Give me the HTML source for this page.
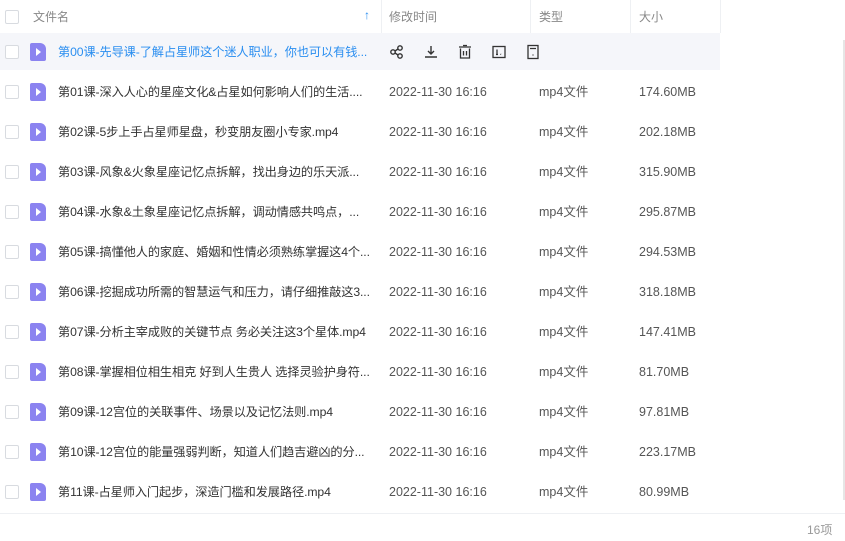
<html><head><style>
body{margin:0;width:845px;height:541px;background:#fff;font-family:"Liberation Sans","Noto Sans CJK SC",sans-serif;position:relative;overflow:hidden;color:#333}
.hd{position:absolute;top:0;left:0;width:720px;height:33px;border-bottom:1px solid #eef0f3;font-size:12px;color:#888}
.hd span{position:absolute;top:9px;line-height:16px}
.sep{position:absolute;top:0;width:1px;height:33px;background:#eef0f3}
.row{position:absolute;left:0;width:720px;height:40px;font-size:12.5px}
.cb{position:absolute;left:5px;top:13px;width:12px;height:12px;border:1px solid #d8dbe0;border-radius:2px;background:#fff}
.ic{position:absolute;left:30px;top:11px;width:16px;height:18px;background:#8b83f0;border-radius:2px 6px 2px 2px}
.ic:after{content:"";position:absolute;left:6px;top:5px;border-left:5px solid #fff;border-top:4px solid transparent;border-bottom:4px solid transparent}
.n,.t,.y,.s{position:absolute;top:12px;line-height:16px;height:16px;white-space:nowrap}
.n{left:58px;font-size:12.2px;letter-spacing:-0.1px}
.t{left:389px;color:#555}
.y{left:539px;color:#555}
.s{left:639px;color:#555}
svg{position:absolute;top:12px}
</style></head><body>
<div class="hd"><div class="cb" style="top:10px"></div><span style="left:33px">文件名</span><span style="left:364px;color:#2a8ef0;top:7px;font-weight:bold">↑</span><span style="left:389px">修改时间</span><span style="left:539px">类型</span><span style="left:639px">大小</span>
<div class="sep" style="left:381px"></div><div class="sep" style="left:530px"></div><div class="sep" style="left:630px"></div><div class="sep" style="left:720px"></div></div>
<div style="position:absolute;left:0;top:33px;width:720px;height:37px;background:#f5f6fa"></div>
<div class="row" style="top:32px"><div class="cb"></div><div class="ic"></div><div class="n" style="color:#2a8ef0">第00课-先导课-了解占星师这个迷人职业，你也可以有钱...</div>
<svg style="left:389px" width="16" height="16" viewBox="0 0 16 16" fill="none" stroke="#333" stroke-width="1.4"><circle cx="4" cy="8" r="2.2"/><circle cx="11" cy="4" r="2.2"/><circle cx="11" cy="12" r="2.2"/><path d="M6 7L9 5M6 9L9 11"/></svg>
<svg style="left:423px" width="16" height="16" viewBox="0 0 16 16" fill="none" stroke="#333" stroke-width="1.4"><path d="M8 2V10M5 7L8 10L11 7M2 13H14"/></svg>
<svg style="left:457px" width="16" height="16" viewBox="0 0 16 16" fill="none" stroke="#333" stroke-width="1.3"><path d="M2 3H14M6 1.5H10M3.5 4.5V14H12.5V4.5M6.5 7V11.5M9.5 7V11.5"/></svg>
<svg style="left:491px" width="16" height="16" viewBox="0 0 16 16" fill="none" stroke="#333" stroke-width="1.3"><rect x="2" y="2.5" width="12" height="11"/><path d="M6 5.5V10.5M5 10.5H7M9.5 10L10 10.5"/></svg>
<svg style="left:525px" width="16" height="16" viewBox="0 0 16 16" fill="none" stroke="#333" stroke-width="1.3"><rect x="3" y="1.5" width="10" height="13"/><path d="M5 4.5H11M8 10.5V11.5"/></svg>
</div>
<div class="row" style="top:72px"><div class="cb"></div><div class="ic"></div><div class="n">第01课-深入人心的星座文化&amp;占星如何影响人们的生活....</div><div class="t">2022-11-30 16:16</div><div class="y">mp4文件</div><div class="s">174.60MB</div></div>
<div class="row" style="top:112px"><div class="cb"></div><div class="ic"></div><div class="n">第02课-5步上手占星师星盘，秒变朋友圈小专家.mp4</div><div class="t">2022-11-30 16:16</div><div class="y">mp4文件</div><div class="s">202.18MB</div></div>
<div class="row" style="top:152px"><div class="cb"></div><div class="ic"></div><div class="n">第03课-风象&amp;火象星座记忆点拆解，找出身边的乐天派...</div><div class="t">2022-11-30 16:16</div><div class="y">mp4文件</div><div class="s">315.90MB</div></div>
<div class="row" style="top:192px"><div class="cb"></div><div class="ic"></div><div class="n">第04课-水象&amp;土象星座记忆点拆解，调动情感共鸣点，...</div><div class="t">2022-11-30 16:16</div><div class="y">mp4文件</div><div class="s">295.87MB</div></div>
<div class="row" style="top:232px"><div class="cb"></div><div class="ic"></div><div class="n">第05课-搞懂他人的家庭、婚姻和性情必须熟练掌握这4个...</div><div class="t">2022-11-30 16:16</div><div class="y">mp4文件</div><div class="s">294.53MB</div></div>
<div class="row" style="top:272px"><div class="cb"></div><div class="ic"></div><div class="n">第06课-挖掘成功所需的智慧运气和压力，请仔细推敲这3...</div><div class="t">2022-11-30 16:16</div><div class="y">mp4文件</div><div class="s">318.18MB</div></div>
<div class="row" style="top:312px"><div class="cb"></div><div class="ic"></div><div class="n">第07课-分析主宰成败的关键节点 务必关注这3个星体.mp4</div><div class="t">2022-11-30 16:16</div><div class="y">mp4文件</div><div class="s">147.41MB</div></div>
<div class="row" style="top:352px"><div class="cb"></div><div class="ic"></div><div class="n">第08课-掌握相位相生相克 好到人生贵人 选择灵验护身符...</div><div class="t">2022-11-30 16:16</div><div class="y">mp4文件</div><div class="s">81.70MB</div></div>
<div class="row" style="top:392px"><div class="cb"></div><div class="ic"></div><div class="n">第09课-12宫位的关联事件、场景以及记忆法则.mp4</div><div class="t">2022-11-30 16:16</div><div class="y">mp4文件</div><div class="s">97.81MB</div></div>
<div class="row" style="top:432px"><div class="cb"></div><div class="ic"></div><div class="n">第10课-12宫位的能量强弱判断，知道人们趋吉避凶的分...</div><div class="t">2022-11-30 16:16</div><div class="y">mp4文件</div><div class="s">223.17MB</div></div>
<div class="row" style="top:472px"><div class="cb"></div><div class="ic"></div><div class="n">第11课-占星师入门起步，深造门槛和发展路径.mp4</div><div class="t">2022-11-30 16:16</div><div class="y">mp4文件</div><div class="s">80.99MB</div></div>
<div style="position:absolute;left:843px;top:40px;width:2px;height:460px;background:#e6e6e6"></div>
<div style="position:absolute;left:0;top:513px;width:845px;height:1px;background:#eef0f3"></div>
<div style="position:absolute;left:807px;top:521px;font-size:12px;color:#999">16项</div>
</body></html>
